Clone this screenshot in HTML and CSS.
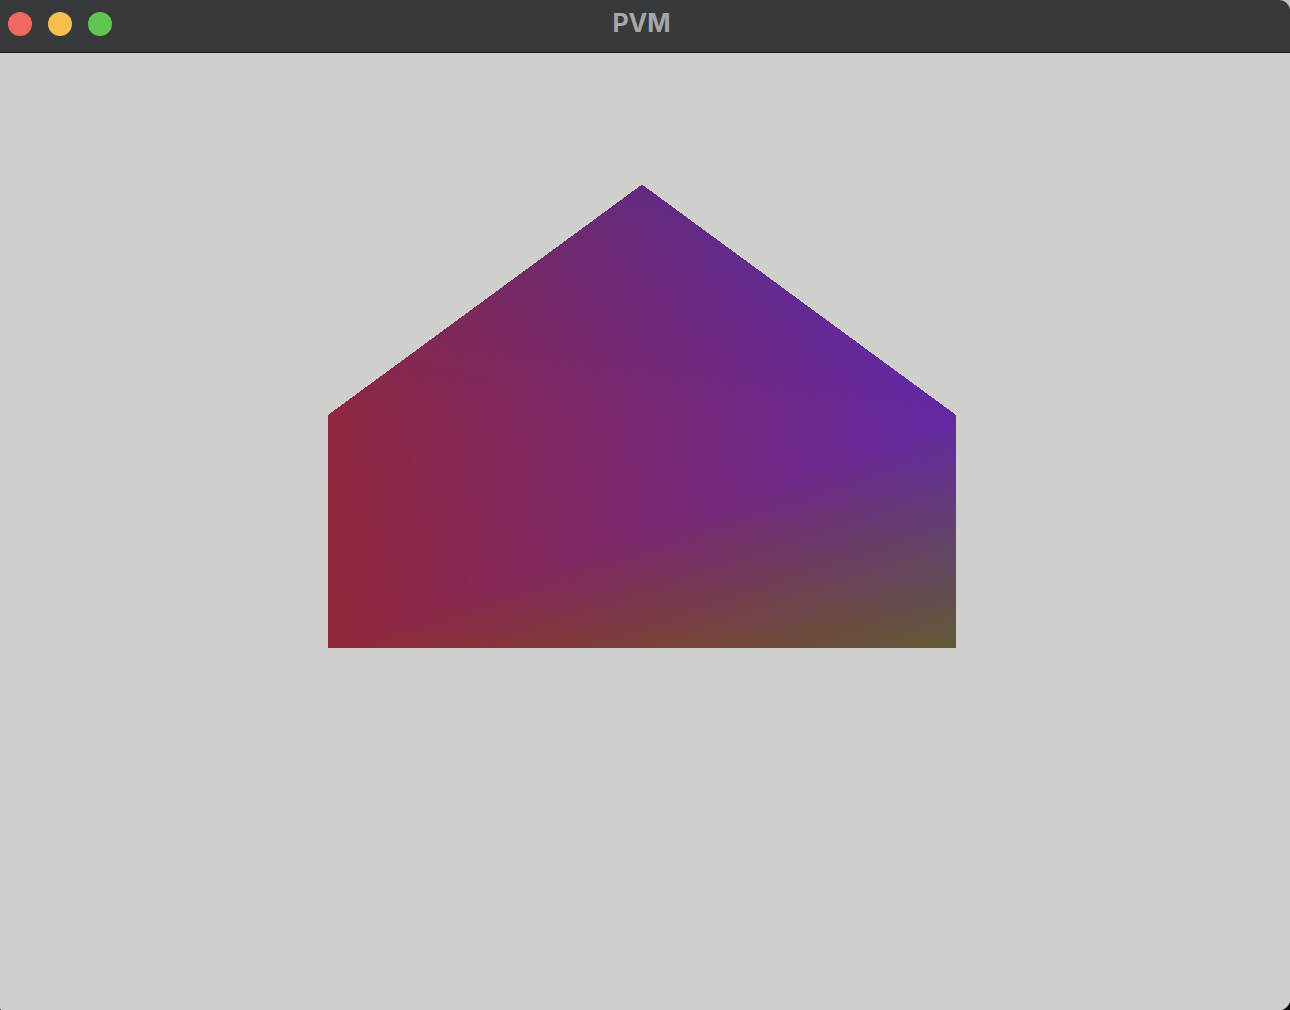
FILE: index.html
```html
<!DOCTYPE html>
<html lang="en">
<head>
<meta charset="utf-8">
<title>PVM</title>
<link rel="stylesheet" href="styles.css">
</head>
<body>
<div class="window">
  <header class="titlebar">
    <div class="lights">
      <span class="light red"></span>
      <span class="light yellow"></span>
      <span class="light green"></span>
    </div>
    <div class="title">PVM</div>
  </header>
  <main class="content">
    <canvas id="view" class="view" width="1290" height="957"></canvas>
  </main>
</div>
<script src="script.js"></script>
</body>
</html>
```
FILE: styles.css
```css
html {
  margin: 0;
  background: linear-gradient(#c4c4c4 0 50%, #0c0c0c 50% 100%);
}
body {
  margin: 0;
  width: 1290px;
  height: 1010px;
  overflow: hidden;
}
.window {
  width: 1290px;
  height: 1010px;
  border-radius: 0 11px 11px 3px;
  overflow: hidden;
  display: flex;
  flex-direction: column;
  background: #cfd0cb;
}
.titlebar {
  position: relative;
  height: 53px;
  flex: 0 0 53px;
  box-sizing: border-box;
  background: #38393b;
  border-bottom: 1px solid #161617;
  display: flex;
  align-items: flex-start;
}
.lights {
  display: flex;
  gap: 16px;
  padding-left: 8px;
  padding-top: 12px;
}
.light {
  width: 24px;
  height: 24px;
  border-radius: 50%;
  display: block;
}
.red { background: #ee6a5f; }
.yellow { background: #f5bf4f; }
.green { background: #61c554; }
.title {
  position: absolute;
  left: 0;
  right: 7px;
  top: 0;
  height: 46px;
  line-height: 46px;
  text-align: center;
  font-family: Inter, "Liberation Sans", Arial, sans-serif;
  font-weight: 700;
  font-size: 25px;
  color: #a7a7a8;
}
.content {
  flex: 1 1 auto;
  display: block;
  background: #cfd0cb;
}
.view {
  display: block;
  width: 1290px;
  height: 957px;
}
```
FILE: script.js
```js
(function () {
  var c = document.getElementById('view');
  var ctx = c.getContext('2d');
  var W = c.width, H = c.height;
  var img = ctx.createImageData(W, H);
  var d = img.data;
  var bg = [207, 208, 203];
  for (var i = 0; i < W * H; i++) {
    d[i * 4] = bg[0]; d[i * 4 + 1] = bg[1]; d[i * 4 + 2] = bg[2]; d[i * 4 + 3] = 255;
  }
  var TL = [328, 362], TR = [956, 362], A = [642, 131.5], BL = [328, 595], BR = [956, 595];
  var cTL = [143, 40, 64], cTR = [99, 41, 166], cA = [100, 42, 128], cBL = [147, 40, 58], cBR = [98, 90, 54];
  var tris = [
    [TL, TR, A, cTL, cTR, cA],
    [BL, TL, TR, cBL, cTL, cTR],
    [BL, BR, TR, cBL, cBR, cTR]
  ];
  function fill(t) {
    var p0 = t[0], p1 = t[1], p2 = t[2];
    var minx = Math.floor(Math.min(p0[0], p1[0], p2[0]));
    var maxx = Math.ceil(Math.max(p0[0], p1[0], p2[0]));
    var miny = Math.floor(Math.min(p0[1], p1[1], p2[1]));
    var maxy = Math.ceil(Math.max(p0[1], p1[1], p2[1]));
    var den = (p1[1] - p2[1]) * (p0[0] - p2[0]) + (p2[0] - p1[0]) * (p0[1] - p2[1]);
    for (var y = miny; y < maxy; y++) {
      for (var x = minx; x < maxx; x++) {
        var px = x + 0.5, py = y + 0.5;
        var w0 = ((p1[1] - p2[1]) * (px - p2[0]) + (p2[0] - p1[0]) * (py - p2[1])) / den;
        var w1 = ((p2[1] - p0[1]) * (px - p2[0]) + (p0[0] - p2[0]) * (py - p2[1])) / den;
        var w2 = 1 - w0 - w1;
        if (w0 < -1e-6 || w1 < -1e-6 || w2 < -1e-6) continue;
        var k = (y * W + x) * 4;
        for (var ch = 0; ch < 3; ch++) {
          d[k + ch] = Math.round(w0 * t[3][ch] + w1 * t[4][ch] + w2 * t[5][ch]);
        }
      }
    }
  }
  tris.forEach(fill);
  ctx.putImageData(img, 0, 0);
})();
```
